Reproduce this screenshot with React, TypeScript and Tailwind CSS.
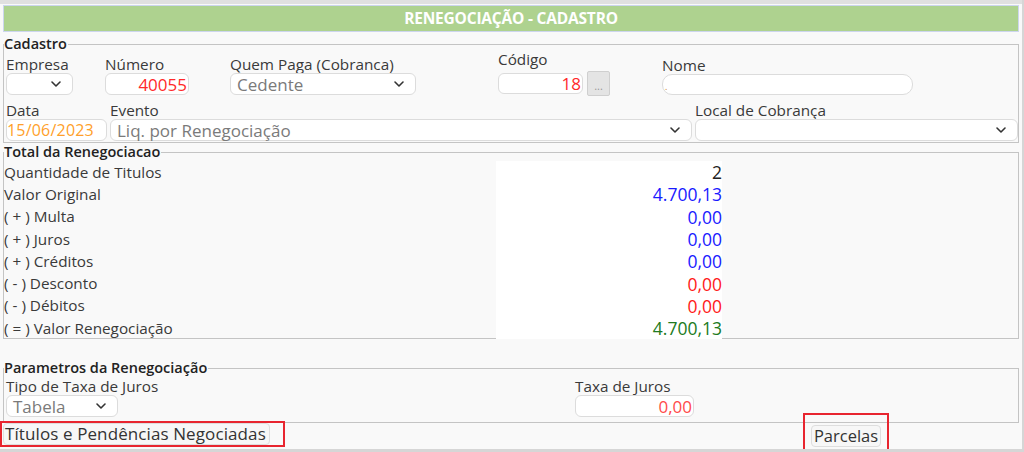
import React from "react";
import { ChevronDown } from "lucide-react";

const font = { fontFamily: '"Open Sans", "Liberation Sans", sans-serif' };

function Sel({ w, text, h = "h-[22px]" }: { w: string; text?: string; h?: string }) {
  return (
    <div className={`${w} ${h} flex items-center justify-between bg-white border border-[#dcdcdc] rounded-[6px] pl-[6px] pr-[8px]`}>
      <span className="text-[17px] text-[#7a7a7a] leading-none">{text}</span>
      <ChevronDown size={16} strokeWidth={2.4} className="text-[#333]" />
    </div>
  );
}

function Inp({ w, text, color, h = "h-[22px]" }: { w: string; text?: string; color?: string; h?: string }) {
  return (
    <div className={`${w} ${h} flex items-center justify-end bg-white border border-[#dcdcdc] rounded-[6px] px-[1px]`}>
      <span className={`text-[17px] leading-none ${color ?? ""}`}>{text}</span>
    </div>
  );
}

const rows: [string, string, string][] = [
  ["Quantidade de Titulos", "2", "text-[#222]"],
  ["Valor Original", "4.700,13", "text-[#1a1aff]"],
  ["( + ) Multa", "0,00", "text-[#1a1aff]"],
  ["( + ) Juros", "0,00", "text-[#1a1aff]"],
  ["( + ) Créditos", "0,00", "text-[#1a1aff]"],
  ["( - ) Desconto", "0,00", "text-[#ff1a1a]"],
  ["( - ) Débitos", "0,00", "text-[#ff1a1a]"],
  ["( = ) Valor Renegociação", "4.700,13", "text-[#217a21]"],
];

const lab = "text-[15.3px] leading-[18px] whitespace-nowrap";
const leg = "text-[14.5px] font-semibold text-[#222] leading-[18px] pr-[1px] whitespace-nowrap";

export default function App() {
  return (
    <div style={font} className="w-[1024px] h-[452px] bg-[#f9f9f9] text-[#3a3a3a] overflow-hidden flex flex-col border-r-2 border-b-[3px] border-[#d6d6d6]">
      <div className="h-[4px] bg-[#e0e0e0] shrink-0" />
      <div className="mx-[3px] mt-[1px] h-[27px] bg-[#aed28f] border border-[#cdd6ee] flex items-center justify-center shrink-0">
        <span className="text-white font-bold text-[15.5px] tracking-[-0.2px]">RENEGOCIAÇÃO - CADASTRO</span>
      </div>

      <fieldset className="mx-[3px] mt-[3px] border border-[#c4c4c4] h-[108px] shrink-0">
        <legend className={leg}>Cadastro</legend>
        <div className="flex items-end pl-[2px] mt-[-3px]">
          <div className="flex flex-col w-[99px]">
            <span className={lab}>Empresa</span>
            <Sel w="w-[67px]" />
          </div>
          <div className="flex flex-col w-[125px]">
            <span className={lab}>Número</span>
            <Inp w="w-[84px]" text="40055" color="text-[#ff2a2a]" />
          </div>
          <div className="flex flex-col w-[268px]">
            <span className={lab}>Quem Paga (Cobranca)</span>
            <Sel w="w-[186px]" text="Cedente" />
          </div>
          <div className="flex flex-col w-[164px] mb-[-1px]">
            <span className={`${lab} mb-[3px]`}>Código</span>
            <div className="flex items-center gap-[4px]">
              <Inp w="w-[85px]" text="18" color="text-[#ff2a2a]" h="h-[21px]" />
              <div className="w-[23px] h-[25px] bg-[#e4e4e4] border border-[#cfcfcf] rounded-[2px] flex items-center justify-center text-[11px] text-[#999] leading-none pt-[4px]">...</div>
            </div>
          </div>
          <div className="flex flex-col">
            <span className={lab}>Nome</span>
            <div className="w-[251px] h-[21px] bg-white border border-[#dcdcdc] rounded-[10px] flex items-end pl-[2px]">
              <span className="text-[9px] text-[#d08020] leading-[14px]">.</span>
            </div>
          </div>
        </div>
        <div className="flex items-end pl-[2px] mt-[6px]">
          <div className="flex flex-col w-[104px]">
            <span className={lab}>Data</span>
            <div className="w-[101px] h-[22px] bg-white border border-[#dcdcdc] rounded-[6px] flex items-center overflow-hidden">
              <span className="text-[16px] leading-none text-[#ff9f2a] whitespace-nowrap tracking-[0.2px]">15/06/2023</span>
            </div>
          </div>
          <div className="flex flex-col w-[585px]">
            <span className={lab}>Evento</span>
            <Sel w="w-[582px]" text="Liq. por Renegociação" />
          </div>
          <div className="flex flex-col">
            <span className={lab}>Local de Cobrança</span>
            <Sel w="w-[323px]" />
          </div>
        </div>
      </fieldset>

      <fieldset className="mx-[3px] border border-[#c4c4c4] h-[196px] shrink-0">
        <legend className={leg}>Total da Renegociacao</legend>
        <div className="grid grid-cols-[492px_226px_1fr]">
          {rows.map(([l, v, c], i) => (
            <React.Fragment key={i}>
              <div className="h-[22.3px] flex items-center text-[15.3px] whitespace-nowrap">{l}</div>
              <div className={`h-[22.3px] bg-white flex items-center justify-end text-[17.5px] ${c}`}>{v}</div>
              <div />
            </React.Fragment>
          ))}
        </div>
      </fieldset>

      <fieldset className="mx-[3px] mt-[20px] border border-[#c4c4c4] h-[64px] shrink-0">
        <legend className={leg}>Parametros da Renegociação</legend>
        <div className="flex items-end pl-[2px]">
          <div className="flex flex-col w-[569px]">
            <span className={lab}>Tipo de Taxa de Juros</span>
            <Sel w="w-[112px]" text="Tabela" />
          </div>
          <div className="flex flex-col">
            <span className={lab}>Taxa de Juros</span>
            <Inp w="w-[119px]" text="0,00" color="text-[#ff4a4a]" />
          </div>
        </div>
      </fieldset>

      <div className="relative flex-1">
        <div className="absolute left-0 top-[-2px] w-[285px] h-[26px] border-2 border-[#e8252f]" />
        <div className="absolute left-[3px] top-[0px] w-[267px] h-[22px] bg-[#f7f7f7] border border-[#dedede] rounded-[4px] flex items-center pl-[1px] text-[17px] text-[#333] whitespace-nowrap overflow-hidden tracking-[0.1px]">Títulos e Pendências Negociadas</div>
        <div className="absolute left-[803px] top-[-10px] w-[86px] h-[38px] border-2 border-[#e8252f]" />
        <div className="absolute left-[811px] top-[2px] w-[70px] h-[22px] bg-[#f7f7f7] border border-[#dedede] rounded-[4px] flex items-center justify-center text-[16.5px] text-[#333]">Parcelas</div>
      </div>
    </div>
  );
}
